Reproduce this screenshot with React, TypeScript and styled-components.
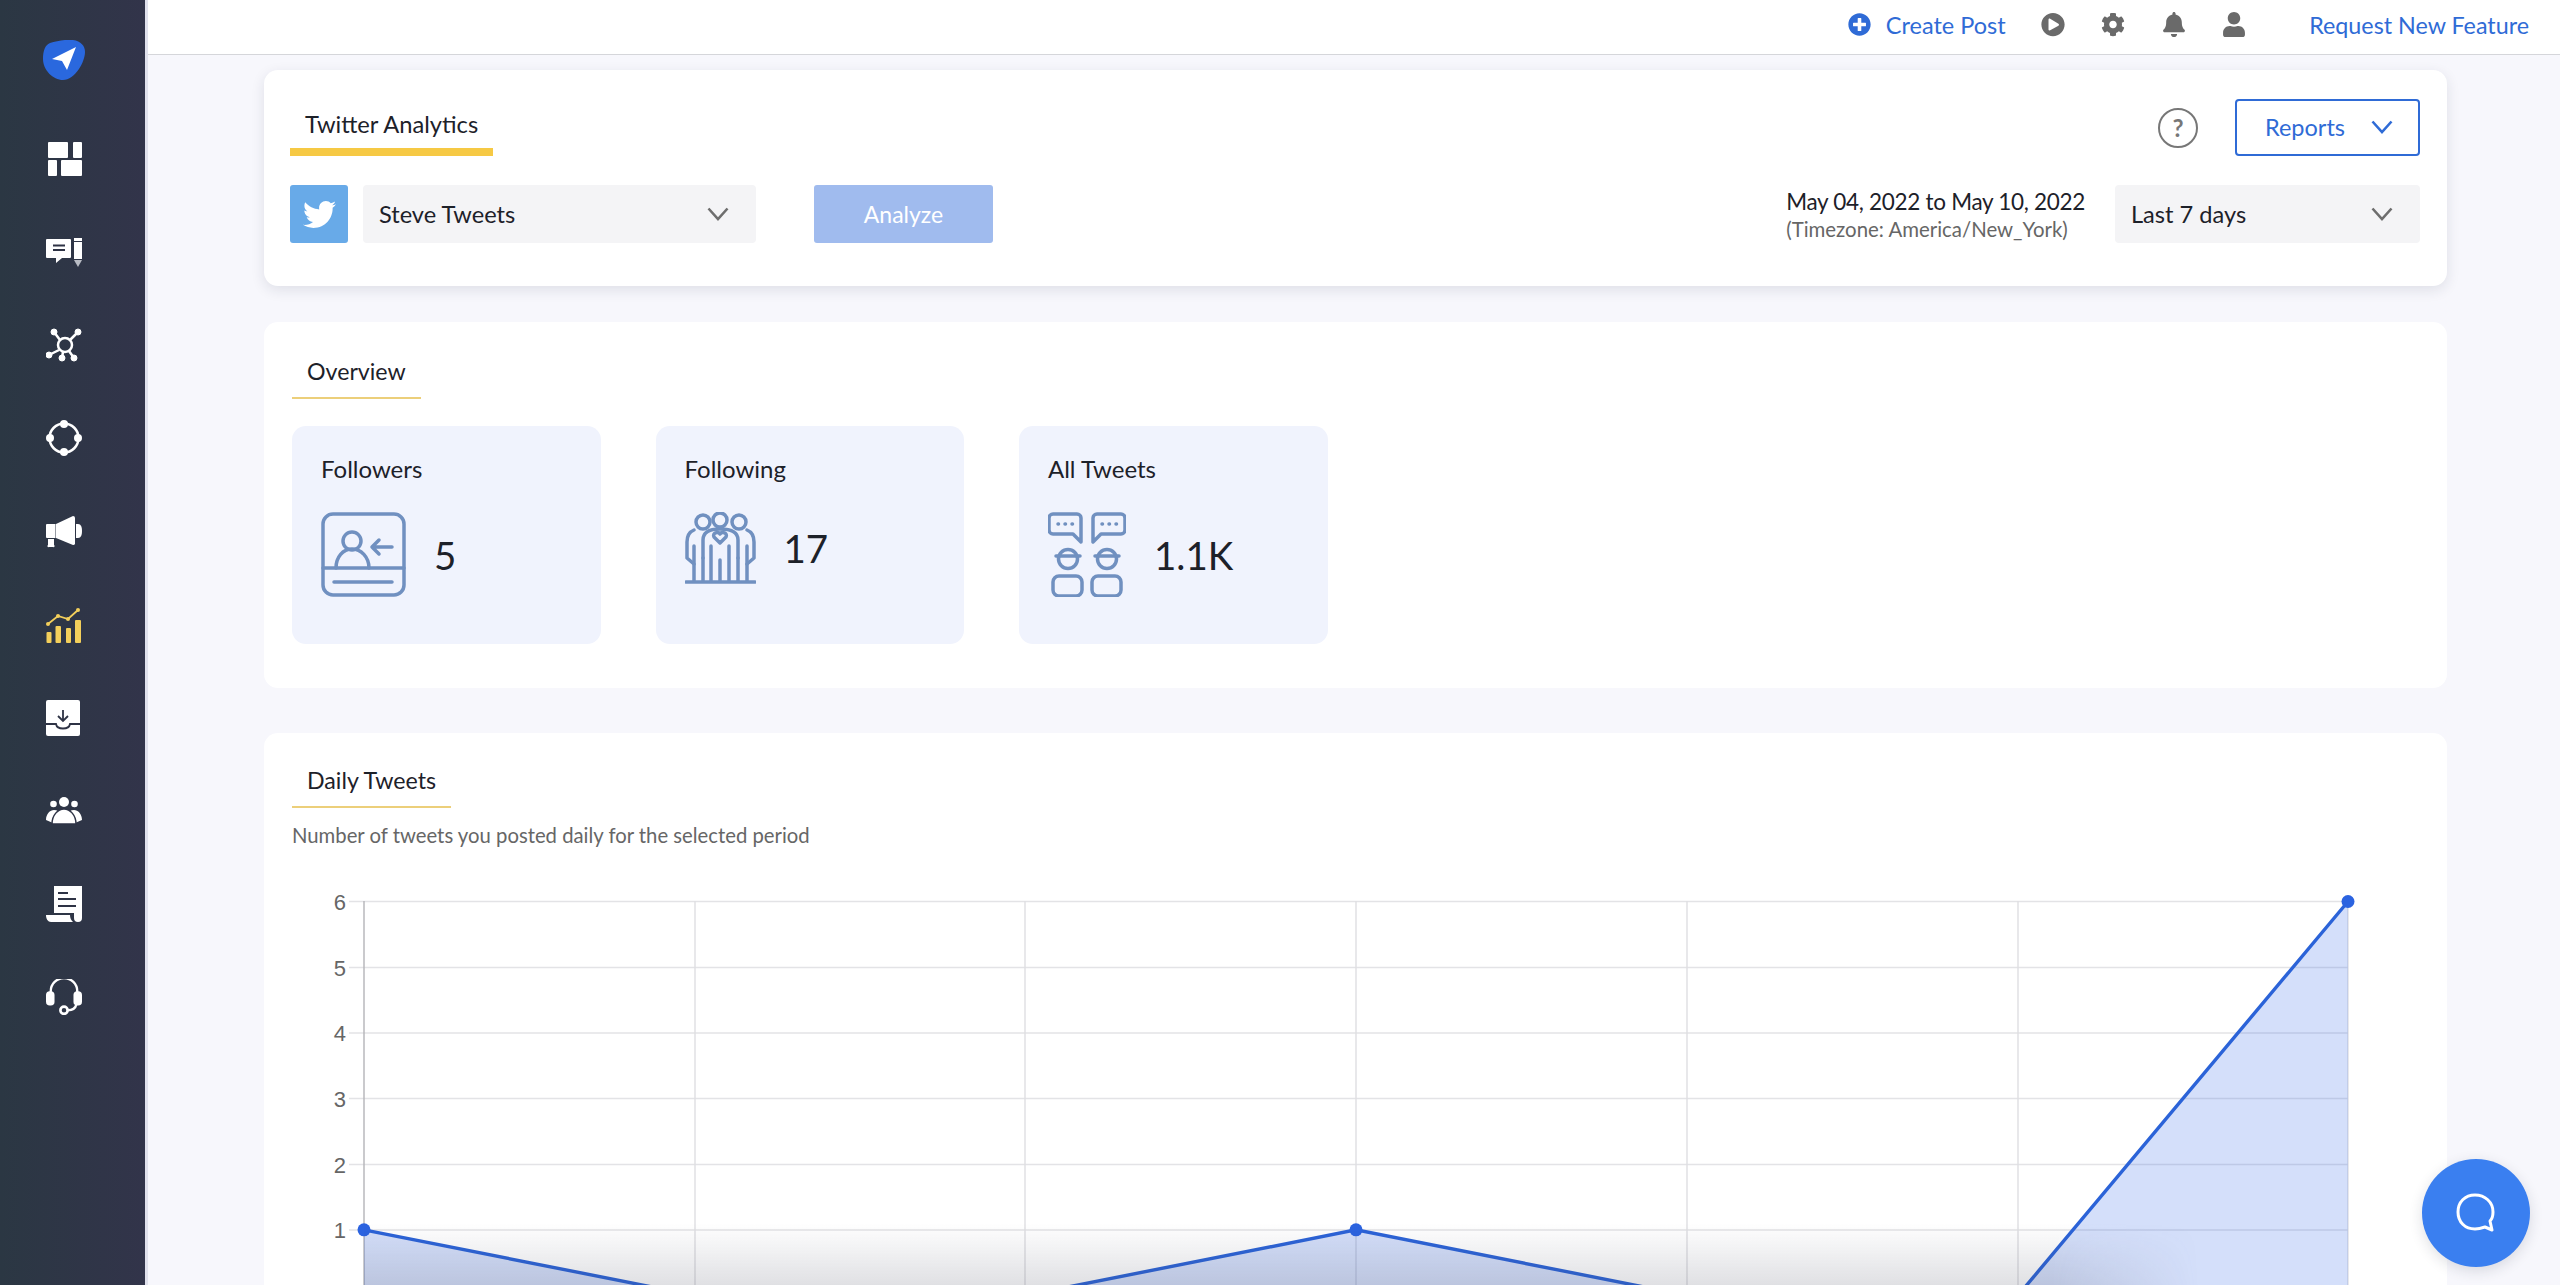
import { FaBell, FaCog, FaPlayCircle, FaPlusCircle, FaTwitter, FaUser } from 'react-icons/fa';
import styled, { createGlobalStyle } from 'styled-components';

const GlobalStyle = createGlobalStyle`
  html, body {
    margin: 0;
    height: 100%;
    overflow: hidden;
  }

  body {
    background: #f7f7fc;
    color: #1d2129;
    font-family: Lato, "Noto Sans", sans-serif;
  }

  * {
    box-sizing: border-box;
  }
`;

const Page = styled.div`
  display: flex;
  height: 100vh;
`;

const Sidebar = styled.nav`
  background: linear-gradient(90deg, #2b3743, #32344a);
  border-right: 3px solid #e0e1ec;
  display: flex;
  flex: 0 0 148px;
  flex-direction: column;
  padding: 40px 18px 0 0;
`;

const Logo = styled.svg`
  align-self: center;
  height: 40px;
  margin-bottom: 32.100px;
  width: 42px;
`;

const NavItem = styled.a`
  align-items: center;
  display: flex;
  flex: 0 0 93.2px;
  justify-content: center;

  svg {
    height: 36px;
    width: 36px;
  }
`;

const Main = styled.div`
  display: flex;
  flex: 1;
  flex-direction: column;
  overflow: hidden;
  position: relative;
`;

const TopBar = styled.header`
  align-items: center;
  background: #fff;
  border-bottom: 1px solid #d5d6da;
  display: flex;
  flex: 0 0 55px;
  justify-content: flex-end;
  padding: 0 31px 5px 0;
`;

const CreatePost = styled.a`
  align-items: center;
  color: #2f6bd6;
  display: flex;
  font-size: 23.5px;
  gap: 15px;
  margin-right: 35px;

  svg {
    height: 23px;
    width: 23px;
  }
`;

const TopIcon = styled.span`
  color: #6a6a6a;
  display: flex;
  justify-content: center;
  margin-right: 36.500px;
  width: 24px;

  svg {
    height: 25px;
    width: 25px;
  }
`;

const RequestLink = styled.a`
  color: #2f6bd6;
  font-size: 23.3px;
  margin-left: 26.500px;
`;

const Content = styled.main`
  display: flex;
  flex-direction: column;
  gap: 36px;
  padding: 15px 113px 0 116px;
`;

const Card = styled.section<{ $raised?: boolean }>`
  background: #fff;
  border-radius: 14px;
  box-shadow: ${({ $raised }) => ($raised ? '0 4px 14px rgba(30, 35, 60, 0.11)' : 'none')};
`;

const AnalyticsCard = styled(Card)`
  padding: 29px 27px 43px 26px;
`;

const HeaderRow = styled.div`
  align-items: flex-end;
  display: flex;
  justify-content: space-between;
`;

const TabTitle = styled.div`
  border-bottom: 8px solid #f6c944;
  font-size: 23.7px;
  line-height: 30px;
  padding: 0 15px 9px;
`;

const HeaderActions = styled.div`
  align-items: center;
  display: flex;
  gap: 37px;
`;

const HelpIcon = styled.span`
  align-items: center;
  border: 2px solid #777;
  border-radius: 50%;
  color: #777;
  display: flex;
  font-size: 24px;
  font-weight: 700;
  height: 40px;
  justify-content: center;
  width: 40px;
`;

const ReportsButton = styled.button`
  align-items: center;
  background: #fff;
  border: 2.5px solid #2f6bd6;
  border-radius: 4px;
  color: #2f6bd6;
  display: flex;
  font-family: inherit;
  font-size: 23.5px;
  height: 57px;
  justify-content: space-between;
  padding: 0 25px 2px 28px;
  width: 185px;
`;

const FilterRow = styled.div`
  align-items: center;
  display: flex;
  margin-top: 29px;
`;

const TwitterBadge = styled.span`
  align-items: center;
  background: #68aae8;
  border-radius: 3px;
  color: #fff;
  display: flex;
  height: 58px;
  justify-content: center;
  margin-right: 15px;
  width: 58px;

  svg {
    height: 33px;
    width: 33px;
  }
`;

const Select = styled.div<{ $width: number }>`
  align-items: center;
  background: #f4f4f6;
  border-radius: 4px;
  display: flex;
  font-size: 23.6px;
  height: 58px;
  justify-content: space-between;
  padding: 0 27px 0 16px;
  width: ${({ $width }) => $width}px;
`;

const AnalyzeButton = styled.button`
  background: #a0bbee;
  border: 0;
  border-radius: 3px;
  color: #fff;
  font-family: inherit;
  font-size: 23px;
  height: 58px;
  margin-left: 58px;
  width: 179px;
`;

const DateBlock = styled.div`
  margin-left: auto;
  margin-right: 30px;
`;

const DateRange = styled.div`
  font-size: 22.5px;
  letter-spacing: -0.3px;
  line-height: 30px;
`;

const Timezone = styled.div`
  color: #666;
  font-size: 20.4px;
  line-height: 24px;
`;

const OverviewCard = styled(Card)`
  padding: 35px 28px 44px;
`;

const SectionTitle = styled.div`
  border-bottom: 2.5px solid #eccf7a;
  display: inline-block;
  font-size: 23.2px;
  line-height: 28px;
  padding: 0 15px 12px;
`;

const StatRow = styled.div`
  display: flex;
  gap: 55px;
  margin-top: 27px;
`;

const StatCard = styled.div`
  background: #f0f3fd;
  border-radius: 14px;
  height: 218px;
  padding: 29px 29px;
  width: 308.500px;
`;

const StatLabel = styled.div`
  font-size: 24px;
  line-height: 28px;
`;

const StatBody = styled.div<{ $height: number }>`
  align-items: center;
  display: flex;
  gap: 28px;
  height: ${({ $height }) => $height}px;
  margin-top: 29px;

  svg {
    fill: none;
    stroke: #7090c0;
    stroke-linecap: round;
    stroke-linejoin: round;
    stroke-width: 3.5;
  }
`;

const StatValue = styled.div`
  font-size: 38.5px;
`;

const TweetsCard = styled(Card)`
  margin-top: 9px;
  padding: 33px 28px 0;
`;

const Subtitle = styled.p`
  color: #666;
  font-size: 20.3px;
  line-height: 26px;
  margin: 14px 0 31px;
`;

const Chart = styled.svg`
  display: block;
  height: 420px;
  width: 2100px;
`;

const BottomShade = styled.div`
  background: linear-gradient(180deg, rgba(70, 72, 92, 0), rgba(70, 72, 92, 0.17));
  bottom: 0;
  height: 62px;
  left: 216px;
  mask-image: linear-gradient(90deg, #000 92%, transparent);
  pointer-events: none;
  position: absolute;
  width: 1835px;
`;

const ChatBubble = styled.button`
  align-items: center;
  background: #3a7ff0;
  border: 0;
  border-radius: 50%;
  bottom: 18px;
  box-shadow: 0 4px 14px rgba(30, 35, 60, 0.14);
  display: flex;
  height: 108px;
  justify-content: center;
  position: absolute;
  right: 30px;
  width: 108px;
`;

const Chevron = ({ color }: { color: string }) => (
  <svg width="22" height="14" viewBox="0 0 22 14" fill="none">
    <path d="M1.5 1.5 11 12 20.5 1.5" stroke={color} strokeWidth="2.6" />
  </svg>
);

const LogoMark = () => (
  <Logo viewBox="0 0 42 40">
    <path d="M7 3C14 1 24-1 30 0c8 1 12 6 12 12 0 10-10 28-22 28C10 40 0 30 0 19 0 11 2 5 7 3z" fill="#2a68de" />
    <path d="M33 7 9 19l10 2 5 9z" fill="#fff" />
  </Logo>
);

const DashboardIcon = () => (
  <svg viewBox="0 0 36 36" fill="#fff">
    <rect x="2" y="1" width="20" height="16" rx="1" />
    <rect x="27" y="1" width="9" height="16" rx="1" />
    <rect x="2" y="19" width="9" height="16" rx="1" />
    <rect x="15" y="19" width="21" height="16" rx="1" />
  </svg>
);

const ComposerIcon = () => (
  <svg viewBox="0 0 36 36">
    <path d="M1 5h23a1 1 0 0 1 1 1v17a1 1 0 0 1-1 1h-8l-6 5v-5H1a1 1 0 0 1-1-1V6a1 1 0 0 1 1-1z" fill="#fff" />
    <path d="M7 11.500h12M7 16h12" stroke="#2e3345" strokeWidth="2" />
    <path d="M28 4h8v3h-8zM28 8h8v17h-8z" fill="#fff" />
    <path d="M28 26h8l-4 7z" fill="#b9bcc4" />
  </svg>
);

const NetworkIcon = () => (
  <svg viewBox="0 0 36 36" fill="#fff" stroke="#fff">
    <circle cx="19" cy="18" r="7" fill="none" strokeWidth="2.500" />
    <path d="M8 5l6 8M32 5l-8 8M3 28l10-5M16 31l1-6M28 31l-5-7" strokeWidth="2.500" />
    <circle cx="8" cy="5" r="3" />
    <circle cx="32" cy="5" r="3" />
    <circle cx="3" cy="28" r="3" />
    <circle cx="16" cy="31" r="3" />
    <circle cx="28" cy="31" r="3" />
  </svg>
);

const OrbitIcon = () => (
  <svg viewBox="0 0 36 36" fill="#fff">
    <circle cx="18" cy="18" r="14.500" fill="none" stroke="#fff" strokeWidth="2.500" />
    <circle cx="18" cy="4" r="4" />
    <circle cx="4" cy="18" r="4" />
    <circle cx="32" cy="18" r="4" />
    <circle cx="18" cy="32" r="4" />
  </svg>
);

const MegaphoneIcon = () => (
  <svg viewBox="0 0 36 36" fill="#fff">
    <path d="M1 11h8.500v14H1a1 1 0 0 1-1-1V12a1 1 0 0 1 1-1z" />
    <path d="M2 26h6v6a1 1 0 0 1-1 2H3a1 1 0 0 1-1-2z" />
    <path d="M10 11 27 3a2 2 0 0 1 2 2v26a2 2 0 0 1-2 1L10 25z" />
    <path d="M30 11h2c3 0 4 3 4 7s-1 7-4 7h-2z" />
  </svg>
);

const AnalyticsIcon = () => (
  <svg viewBox="0 0 36 36" fill="#f3cf5b">
    <rect x="0.500" y="25" width="5" height="11" rx="1" />
    <rect x="9.500" y="19" width="5.500" height="17" rx="1" />
    <rect x="20" y="21" width="5" height="15" rx="1" />
    <rect x="29" y="13" width="6" height="23" rx="1" />
    <path d="M2 17 12 9l10 3L32 3" fill="none" stroke="#f3cf5b" strokeWidth="1.800" />
    <circle cx="2" cy="17" r="2" />
    <circle cx="12" cy="9" r="2" />
    <circle cx="22" cy="12" r="2" />
    <circle cx="32" cy="3" r="2" />
  </svg>
);

const InboxIcon = () => (
  <svg viewBox="0 0 36 36">
    <rect x="0" y="0" width="34" height="36" rx="2" fill="#fff" />
    <path d="M0 24h10c1 6 13 6 14 0h10M17 10v11M12 16l5 5 5-5" fill="none" stroke="#2e3345" strokeWidth="1.800" />
  </svg>
);

const TeamIcon = () => (
  <svg viewBox="0 0 36 36" fill="#fff">
    <circle cx="18" cy="9" r="5" />
    <circle cx="7.500" cy="11" r="3.300" />
    <circle cx="28.500" cy="11" r="3.300" />
    <path d="M0 27c0-6 4-10 8-10 3 0 6 2 7 4l-8 9zM36 27c0-6-4-10-8-10-3 0-6 2-7 4l8 9z" />
    <path d="M6 31c0-9 6-15 12-15s12 6 12 15z" stroke="#2e3345" strokeWidth="1.500" />
  </svg>
);

const LedgerIcon = () => (
  <svg viewBox="0 0 36 36">
    <path d="M8 0h28v32a4 4 0 0 1-8 0v-5H8z" fill="#fff" />
    <path d="M12 7h10M12 13h18M12 20h18" stroke="#2e3345" strokeWidth="1.800" />
    <path d="M0 29h24c0 3 1 5 3 7H5c-3 0-5-3-5-7z" fill="#fff" />
  </svg>
);

const SupportIcon = () => (
  <svg viewBox="0 0 38 38">
    <path d="M5 16v-3a14 14 0 0 1 28 0v3" fill="none" stroke="#fff" strokeWidth="2.500" />
    <rect x="0" y="13" width="9" height="15" rx="4" fill="#fff" />
    <rect x="29" y="13" width="9" height="15" rx="4" fill="#fff" />
    <circle cx="19" cy="33" r="3.800" fill="none" stroke="#fff" strokeWidth="2.800" />
    <path d="M23 33c4 0 8-1 9-6" fill="none" stroke="#fff" strokeWidth="2.500" />
  </svg>
);

const FollowersIcon = () => (
  <svg width="85" height="85" viewBox="0 0 85 85">
    <rect x="2" y="2" width="81" height="81" rx="10" />
    <path d="M2 56h81M13 70h58" />
    <circle cx="31" cy="29" r="9" />
    <path d="M15 56c0-11 7-19 16-19s17 8 17 19M71 35H51M58 28l-7 7 7 7" />
  </svg>
);

const FollowingIcon = () => (
  <svg width="71" height="72" viewBox="0 0 71 72">
    <circle cx="18" cy="10" r="7" />
    <circle cx="35" cy="8" r="7" />
    <circle cx="54" cy="10" r="7" />
    <path d="M9 18C4 20 2 24 2 30v16l7 6M62 18c5 2 7 6 7 12v16l-7 6" />
    <path d="M18 46V28c0-8 6-11 17-11s18 3 18 11v18" />
    <path d="M9 34v36M18 46v24M26 34v36M35 48v22M44 34v36M53 46v24M62 34v36M1 70h69" />
    <path d="M35 31l-6-6c-2-4 4-6 6-3 2-3 8-1 6 3z" />
  </svg>
);

const AllTweetsIcon = () => (
  <svg width="78" height="85" viewBox="0 0 78 85">
    <path d="M5 2h24a4 4 0 0 1 4 4v24l-8-8H5a4 4 0 0 1-4-4V6a4 4 0 0 1 4-4z" />
    <path d="M49 2h24a4 4 0 0 1 4 4v12a4 4 0 0 1-4 4H53l-8 8V6a4 4 0 0 1 4-4z" />
    <path d="M10 12h.5M17 12h.5M24 12h.5M54 12h.5M61 12h.5M68 12h.5" />
    <circle cx="20" cy="47" r="9.500" />
    <circle cx="59" cy="47" r="9.500" />
    <path d="M8 44h24M47 44h24" />
    <rect x="5" y="64" width="29" height="20" rx="6" />
    <rect x="44" y="64" width="29" height="20" rx="6" />
  </svg>
);

const gridY = [902.5, 968.5, 1034, 1099.5, 1165.5, 1231];
const gridX = [364, 695, 1025, 1356, 1687, 2018, 2348];
const baseY = 1296.5;
const series = [1, 0, 0, 1, 0, 0, 6];

const pointY = (value: number) => baseY - value * ((baseY - gridY[0]) / 6);
const linePoints = series.map((value, i) => `${gridX[i]},${pointY(value)}`).join(' ');

const TweetsChart = () => (
  <Chart viewBox="292 880 2100 420">
    {gridY.map((y) => (
      <line key={y} x1="349" x2="2348" y1={y} y2={y} stroke="#e3e3e6" strokeWidth="1.600" />
    ))}
    {gridX.map((x, i) => (
      <line key={x} x1={x} x2={x} y1="902" y2="1300" stroke={i === 0 ? '#b4b4b8' : '#dedee2'} strokeWidth="1.400" />
    ))}
    {gridY.map((y, i) => (
      <text key={y} x="346" y={y + 8} textAnchor="end" fontFamily="'Liberation Sans', sans-serif" fontSize="22" fill="#666">
        {6 - i}
      </text>
    ))}
    <polygon points={`${linePoints} 2348,${baseY} 364,${baseY}`} fill="#3268e6" fillOpacity="0.21" />
    <polyline points={linePoints} fill="none" stroke="#2b63d8" strokeWidth="3.400" />
    {series.map((value, i) => (
      <circle key={gridX[i]} cx={gridX[i]} cy={pointY(value)} r="6.500" fill="#2b63e0" />
    ))}
  </Chart>
);

export default function App() {
  return (
    <Page>
      <GlobalStyle />
      <Sidebar>
        <LogoMark />
        <NavItem><DashboardIcon /></NavItem>
        <NavItem><ComposerIcon /></NavItem>
        <NavItem><NetworkIcon /></NavItem>
        <NavItem><OrbitIcon /></NavItem>
        <NavItem><MegaphoneIcon /></NavItem>
        <NavItem><AnalyticsIcon /></NavItem>
        <NavItem><InboxIcon /></NavItem>
        <NavItem><TeamIcon /></NavItem>
        <NavItem><LedgerIcon /></NavItem>
        <NavItem><SupportIcon /></NavItem>
      </Sidebar>
      <Main>
        <TopBar>
          <CreatePost><FaPlusCircle />Create Post</CreatePost>
          <TopIcon><FaPlayCircle /></TopIcon>
          <TopIcon><FaCog /></TopIcon>
          <TopIcon><FaBell /></TopIcon>
          <TopIcon><FaUser /></TopIcon>
          <RequestLink>Request New Feature</RequestLink>
        </TopBar>
        <Content>
          <AnalyticsCard $raised>
            <HeaderRow>
              <TabTitle>Twitter Analytics</TabTitle>
              <HeaderActions>
                <HelpIcon>?</HelpIcon>
                <ReportsButton>Reports<Chevron color="#2f6bd6" /></ReportsButton>
              </HeaderActions>
            </HeaderRow>
            <FilterRow>
              <TwitterBadge><FaTwitter /></TwitterBadge>
              <Select $width={393}>Steve Tweets<Chevron color="#6e6e6e" /></Select>
              <AnalyzeButton>Analyze</AnalyzeButton>
              <DateBlock>
                <DateRange>May 04, 2022 to May 10, 2022</DateRange>
                <Timezone>(Timezone: America/New_York)</Timezone>
              </DateBlock>
              <Select $width={305}>Last 7 days<Chevron color="#6e6e6e" /></Select>
            </FilterRow>
          </AnalyticsCard>
          <OverviewCard>
            <SectionTitle>Overview</SectionTitle>
            <StatRow>
              <StatCard>
                <StatLabel>Followers</StatLabel>
                <StatBody $height={85}><FollowersIcon /><StatValue>5</StatValue></StatBody>
              </StatCard>
              <StatCard>
                <StatLabel>Following</StatLabel>
                <StatBody $height={72}><FollowingIcon /><StatValue>17</StatValue></StatBody>
              </StatCard>
              <StatCard>
                <StatLabel>All Tweets</StatLabel>
                <StatBody $height={85}><AllTweetsIcon /><StatValue>1.1K</StatValue></StatBody>
              </StatCard>
            </StatRow>
          </OverviewCard>
          <TweetsCard>
            <SectionTitle>Daily Tweets</SectionTitle>
            <Subtitle>Number of tweets you posted daily for the selected period</Subtitle>
            <TweetsChart />
          </TweetsCard>
        </Content>
        <BottomShade />
        <ChatBubble>
          <svg width="42" height="42" viewBox="0 0 42 42" fill="none">
            <path d="M20 3c10 0 18 7 18 17 0 4-1 7-3 9l2 9-7-3c-3 1-6 2-10 2C10 37 3 30 3 20S10 3 20 3z" stroke="#fff" strokeWidth="3" strokeLinejoin="round" />
          </svg>
        </ChatBubble>
      </Main>
    </Page>
  );
}
